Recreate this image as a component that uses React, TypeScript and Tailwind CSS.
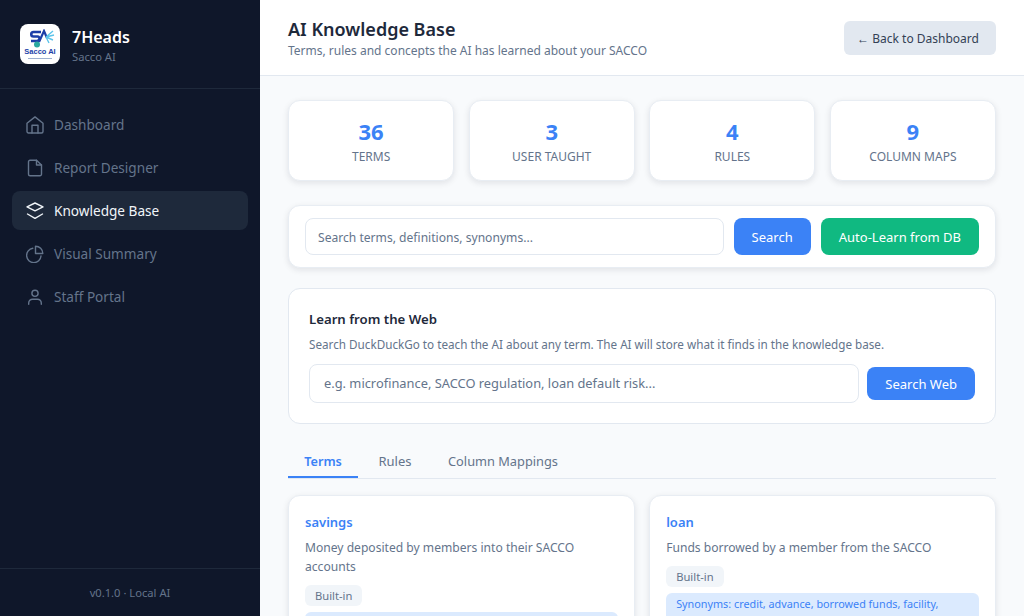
import React from 'react';

type IconProps = { className?: string };

const iconBase = {
  viewBox: '0 0 18 18',
  fill: 'none',
  stroke: 'currentColor',
  strokeWidth: 1.4,
  strokeLinecap: 'round' as const,
  strokeLinejoin: 'round' as const,
};

const HomeIcon: React.FC<IconProps> = ({ className }) => (
  <svg className={className} {...iconBase}>
    <path d="M1 7.3L9 .9l8 6.4v8.2a1.5 1.5 0 0 1-1.5 1.5h-13A1.5 1.5 0 0 1 1 15.5Z" />
    <path d="M6 17V9.2h6V17" />
  </svg>
);

const FileIcon: React.FC<IconProps> = ({ className }) => (
  <svg className={className} {...iconBase}>
    <path d="M4 1.2h6.5L15.5 6v9.3a1.5 1.5 0 0 1-1.5 1.5H4a1.5 1.5 0 0 1-1.5-1.5V2.7A1.5 1.5 0 0 1 4 1.2Z" />
    <path d="M10.5 1.2V6h5" />
  </svg>
);

const LayersIcon: React.FC<IconProps> = ({ className }) => (
  <svg className={className} {...iconBase}>
    <path d="M1 4.9L9 1l8 3.9-8 3.9Z" />
    <path d="M1.5 12L9 16.3 16.5 12" />
  </svg>
);

const PieIcon: React.FC<IconProps> = ({ className }) => (
  <svg className={className} {...iconBase}>
    <path d="M9.5 1.2A7.3 7.3 0 0 1 16.8 8.5H9.5Z" />
    <path d="M6.8 3.3A7.2 7.2 0 1 0 15 11" />
  </svg>
);

const UserIcon: React.FC<IconProps> = ({ className }) => (
  <svg className={className} {...iconBase}>
    <circle cx="9" cy="5.3" r="3.1" />
    <path d="M2.7 16.3V15a3.8 3.8 0 0 1 3.8-3.8h5a3.8 3.8 0 0 1 3.8 3.8v1.3" />
  </svg>
);

const navItems = [
  { label: 'Dashboard', icon: HomeIcon },
  { label: 'Report Designer', icon: FileIcon },
  { label: 'Knowledge Base', icon: LayersIcon, active: true },
  { label: 'Visual Summary', icon: PieIcon },
  { label: 'Staff Portal', icon: UserIcon },
];

const stats = [
  { value: '36', label: 'TERMS' },
  { value: '3', label: 'USER TAUGHT' },
  { value: '4', label: 'RULES' },
  { value: '9', label: 'COLUMN MAPS' },
];

const Logo: React.FC = () => (
  <div className="w-10 h-10 rounded-lg bg-white flex flex-col items-center justify-center overflow-hidden">
    <svg className="w-8 h-[19px] mt-0.5" viewBox="0 0 32 19" fill="none">
      <path d="M17 3H9.5C6.5 3 6.5 7.5 9.5 7.5H13.5C16.5 7.5 16 12 13 12H7" stroke="#1d3fa8" strokeWidth="2.6" />
      <path d="M15 13L20 2L23 9" stroke="#1d3fa8" strokeWidth="2.2" />
      <path d="M22 8L29 2M22 8L30 6M22 8L29 11M22 8L25 14" stroke="#5cc4ea" strokeWidth="1.4" />
      <circle cx="13" cy="15.5" r="3" fill="#2aa8a0" />
    </svg>
    <span className="text-[7.5px] leading-[8px] font-bold text-[#1d3fa8] font-['Liberation_Sans',sans-serif]">Sacco AI</span>
    <div className="w-6 h-px bg-[#9db0d0] mt-0.5 mb-0.5" />
  </div>
);

const Sidebar: React.FC = () => (
  <div className="w-[260px] h-full shrink-0 bg-[#0f172a] flex flex-col">
    <div className="h-[89px] shrink-0 px-5 flex items-center gap-3 border-b border-[#1e293b]">
      <Logo />
      <div className="pt-0.5">
        <div className="text-base leading-[22px] font-semibold text-white">7Heads</div>
        <div className="text-[11.2px] leading-[17px] text-[#64748b]">Sacco AI</div>
      </div>
    </div>
    <div className="flex-1 px-3 pt-4 flex flex-col gap-1">
      {navItems.map(item => {
        const Icon = item.icon;
        return (
          <div
            key={item.label}
            className={`h-[39px] pl-3.5 rounded-lg flex items-center gap-2.5 text-[13.6px] ${
              item.active ? 'bg-[#1e293b] text-[#f1f5f9]' : 'text-[#64748b]'
            }`}
          >
            <Icon className="w-[18px] h-[18px]" />
            <span className="pt-0.5">{item.label}</span>
          </div>
        );
      })}
    </div>
    <div className="h-[48px] shrink-0 border-t border-[#1e293b] flex items-center justify-center pt-0.5 text-[11.2px] text-[#64748b]">
      v0.1.0 · Local AI
    </div>
  </div>
);

const App: React.FC = () => {
  return (
    <div className="w-[1024px] h-[616px] flex overflow-hidden bg-[#f8fafc] font-['Noto_Sans',sans-serif]">
      <Sidebar />
      <div className="flex-1 h-full flex flex-col min-w-0">
        <div className="h-[76px] shrink-0 bg-white border-b border-[#e2e8f0] px-7 flex items-center justify-between">
          <div className="pt-0.5">
            <h1 className="text-lg leading-[24px] font-semibold text-[#1e293b]">AI Knowledge Base</h1>
            <p className="text-xs leading-[18px] mt-px text-[#64748b]">Terms, rules and concepts the AI has learned about your SACCO</p>
          </div>
          <button className="w-[152px] h-[34px] pt-[3px] pr-1 rounded-md bg-[#e2e8f0] text-xs text-[#334155]">← Back to Dashboard</button>
        </div>

        <div className="flex-1 overflow-hidden px-7 pt-6">
          <div className="grid grid-cols-4 gap-[14.4px] mb-6">
            {stats.map(stat => (
              <div key={stat.label} className="h-[81px] rounded-xl bg-white border border-[#e8edf3] shadow-[0_2px_6px_rgba(15,23,42,0.1)] flex flex-col items-center pt-[15px]">
                <div className="text-[22px] leading-[30px] font-bold text-[#3b82f6]">{stat.value}</div>
                <div className="text-xs leading-[16px] mt-[3px] text-[#64748b]">{stat.label}</div>
              </div>
            ))}
          </div>

          <div className="h-[63px] rounded-xl bg-white border border-[#e8edf3] shadow-[0_2px_6px_rgba(15,23,42,0.1)] px-4 flex items-center gap-2.5 mb-5">
            <div className="flex-1 h-[37px] rounded-lg border border-[#e2e8f0] px-3 pt-[3px] flex items-center text-[12.1px] text-[#64748b]">Search terms, definitions, synonyms...</div>
            <button className="h-[37px] px-[18px] pt-[3px] rounded-lg bg-[#3b82f6] text-[13px] text-white">Search</button>
            <button className="h-[37px] px-[18px] pt-[3px] rounded-lg bg-[#10b981] text-[13px] text-white">Auto-Learn from DB</button>
          </div>

          <div className="h-[136px] rounded-xl bg-white border border-[#e2e8f0] px-5 pt-5 mb-5">
            <div className="text-[13.2px] leading-[20px] font-semibold text-[#1e293b]">Learn from the Web</div>
            <div className="text-[11.7px] leading-[17px] mt-[7px] text-[#64748b]">Search DuckDuckGo to teach the AI about any term. The AI will store what it finds in the knowledge base.</div>
            <div className="flex items-center gap-2 mt-[11px]">
              <div className="flex-1 h-[39px] rounded-lg border border-[#e2e8f0] px-3.5 pt-px flex items-center text-[12.85px] text-[#64748b]">e.g. microfinance, SACCO regulation, loan default risk...</div>
              <button className="h-[33px] px-[18px] pt-[3px] rounded-lg bg-[#3b82f6] text-[13px] text-white">Search Web</button>
            </div>
          </div>

          <div className="flex gap-1 border-b border-[#e2e8f0] mb-4">
            <div className="w-[70px] h-[34px] pt-[3px] flex items-center justify-center text-[12.7px] font-semibold text-[#3b82f6] border-b-2 border-[#3b82f6] -mb-px">Terms</div>
            <div className="w-[66px] h-[34px] pt-[2px] flex items-center justify-center text-[13px] text-[#64748b]">Rules</div>
            <div className="h-[34px] px-4 pt-[2px] flex items-center text-[12.8px] text-[#64748b]">Column Mappings</div>
          </div>

          <div className="grid grid-cols-2 gap-[14.4px]">
            <div className="h-[200px] rounded-xl bg-white border border-[#e8edf3] shadow-[0_2px_6px_rgba(15,23,42,0.1)] p-4">
              <div className="text-[13px] leading-[20px] font-semibold text-[#3b82f6]">savings</div>
              <div className="text-[12.1px] leading-[19px] mt-1.5 text-[#64748b]">Money deposited by members into their SACCO accounts</div>
              <span className="inline-block mt-[9px] px-2.5 py-0.5 rounded-md bg-[#f1f5f9] text-[11.2px] leading-[17px] text-[#64748b]">Built-in</span>
              <div className="mt-1.5 h-10 rounded-md bg-[#dbeafe]" />
            </div>
            <div className="h-[200px] rounded-xl bg-white border border-[#e8edf3] shadow-[0_2px_6px_rgba(15,23,42,0.1)] p-4">
              <div className="text-[13px] leading-[20px] font-semibold text-[#3b82f6]">loan</div>
              <div className="text-[12.1px] leading-[19px] mt-1.5 text-[#64748b]">Funds borrowed by a member from the SACCO</div>
              <span className="inline-block mt-[9px] px-2.5 py-0.5 rounded-md bg-[#f1f5f9] text-[11.2px] leading-[17px] text-[#64748b]">Built-in</span>
              <div className="mt-1.5 px-2.5 py-0.5 rounded-md bg-[#dbeafe] text-[10.8px] leading-[18px] text-[#3b82f6]">Synonyms: credit, advance, borrowed funds, facility, financing</div>
            </div>
          </div>
        </div>
      </div>
    </div>
  );
};

export default App;
